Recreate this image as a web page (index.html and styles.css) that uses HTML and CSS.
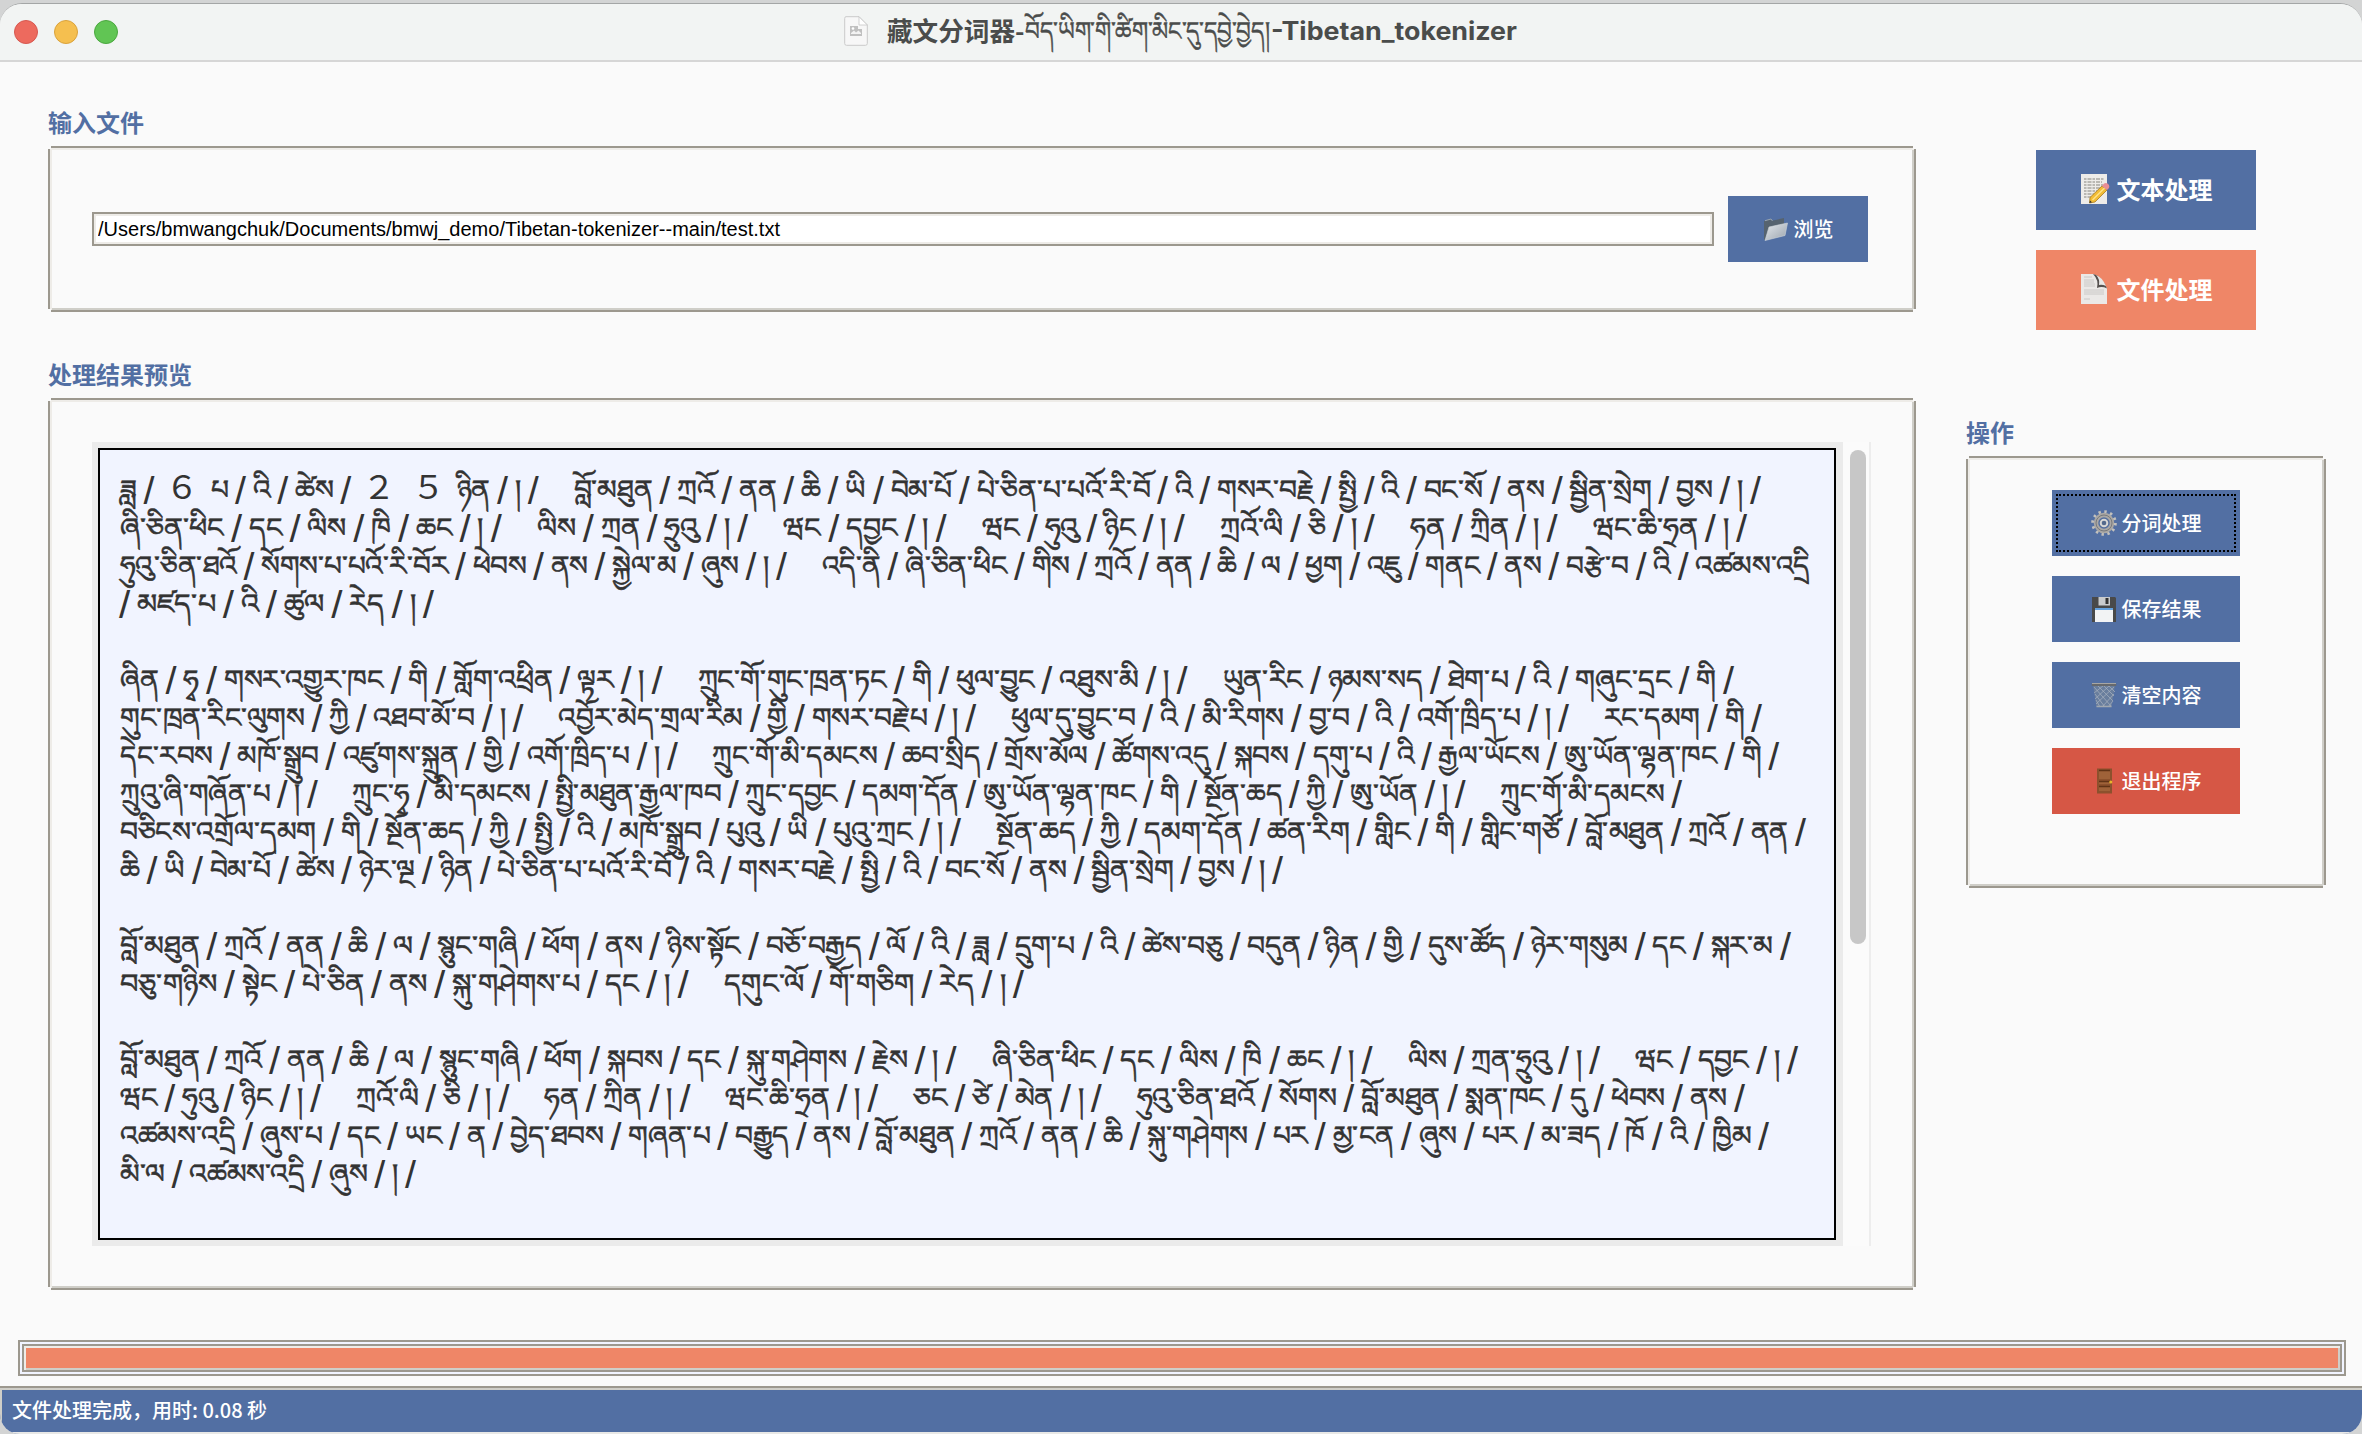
FILE: index.html
```html
<!DOCTYPE html>
<html lang="zh-CN">
<head>
<meta charset="utf-8">
<title>藏文分词器-Tibetan_tokenizer</title>
<link rel="stylesheet" href="styles.css">
</head>
<body>
<div class="window">
  <header class="titlebar">
    <div class="lights"><i class="red"></i><i class="yellow"></i><i class="green"></i></div>
    <h1 class="title">
      <svg class="doc" viewBox="0 0 24 30"><path d="M2 .7H15L23.3 9V27.5Q23.3 29.3 21.500 29.300H2.500Q.7 29.300.7 27.500V2.500Q.7.7 2 .7Z" fill="#f7f7f7" stroke="#cacaca"/><path d="M15 .7V9H23.300Z" fill="#fff" stroke="#c6c6c6" stroke-width=".8"/><path d="M6 10H14V13H18V20H6Z" fill="#c0c0c0"/><path d="M7 18V17L10 14.500L12 16.500L14.500 14.500L17 17V18Z" fill="#fff" opacity=".8"/><circle cx="9" cy="12.500" r="1.300" fill="#fff"/></svg>
      <span class="t-cjk">藏文分词器-</span><span class="t-bo" lang="bo"><span class="fit" data-w="245">བོད་ཡིག་གི་ཚིག་མིང་དུ་དབྱེ་བྱེད།</span></span><span class="t-lat"><span class="fit" data-w="246">-Tibetan_tokenizer</span></span>
    </h1>
  </header>
  <main class="content">
    <section class="left">
      <h2 class="label">输入文件</h2>
      <div class="frame file">
        <div class="entry"><span class="fit" data-w="682">/Users/bmwangchuk/Documents/bmwj_demo/Tibetan-tokenizer--main/test.txt</span></div>
        <button class="btn browse">
          <svg class="ic" viewBox="0 0 26 26"><defs><linearGradient id="fo" x1="0" y1="0" x2="1" y2="1"><stop offset="0" stop-color="#e4e8ec"/><stop offset="1" stop-color="#9aa3ad"/></linearGradient></defs><path d="M1 5L8 3L10 4.500L21 2V9L3 23L1 24Z" fill="#56636f"/><path d="M2 4.700L8 3L9.500 5" stroke="#98a4b0" fill="none"/><path d="M6 11L24.500 7L22 19.500L2 24.500Z" fill="url(#fo)" stroke="#d2d7dc" stroke-width=".6"/></svg>浏览</button>
      </div>
      <h2 class="label second">处理结果预览</h2>
      <div class="frame preview">
        <div class="textwrap"><div class="text" lang="bo">
<p><span class="fit" data-w="1640">ཟླ / <b>６</b> པ / འི / ཚེས / <b>２</b> <b>５</b> ཉིན / ། / &emsp;བློ་མཐུན / ཀྲའོ / ནན / ཆི / ཡི / བེམ་པོ / པེ་ཅིན་པ་པའོ་རི་བོ / འི / གསར་བརྗེ / སྤྱི / འི / བང་སོ / ནས / སྦྱིན་སྲེག / བྱས / ། /</span></p>
<p><span class="fit" data-w="1626">ཞི་ཅིན་ཕིང / དང / ལིས / ཁི / ཆང / ། / &emsp;ལིས / ཀྲན / ཧྲུའུ / ། / &emsp;ཝང / དབྱང / ། / &emsp;ཝང / ཧུའུ / ཉིང / ། / &emsp;ཀྲའོ་ལི / ཅི / ། / &emsp;ཧན / ཀྲིན / ། / &emsp;ཝང་ཆི་ཧྲན / ། /</span></p>
<p><span class="fit" data-w="1690">ཧུའུ་ཅིན་ཐའོ / སོགས་པ་པའོ་རི་བོར / ཕེབས / ནས / སྐྱེལ་མ / ཞུས / ། / &emsp;འདི་ནི / ཞི་ཅིན་ཕིང / གིས / ཀྲའོ / ནན / ཆི / ལ / ཕྱག / འཇུ / གནང / ནས / བརྩེ་བ / འི / འཚམས་འདྲི</span></p>
<p><span class="fit" data-w="313">/ མཛད་པ / འི / ཚུལ / རེད / ། /</span></p>
<p></p>
<p><span class="fit" data-w="1613">ཞིན / ཧྭ / གསར་འགྱུར་ཁང / གི / གློག་འཕྲིན / ལྟར / ། / &emsp;ཀྲུང་གོ་གུང་ཁྲན་ཏང / གི / ཕུལ་བྱུང / འཐུས་མི / ། / &emsp;ཡུན་རིང / ཉམས་སད / ཐེག་པ / འི / གཞུང་དྲང / གི /</span></p>
<p><span class="fit" data-w="1641">གུང་ཁྲན་རིང་ལུགས / ཀྱི / འཐབ་མོ་བ / ། / &emsp;འབྱོར་མེད་གྲལ་རིམ / གྱི / གསར་བརྗེ་པ / ། / &emsp;ཕུལ་དུ་བྱུང་བ / འི / མི་རིགས / བྱ་བ / འི / འགོ་ཁྲིད་པ / ། / &emsp;རང་དམག / གི /</span></p>
<p><span class="fit" data-w="1658">དེང་རབས / མཁོ་སྒྲུབ / འཛུགས་སྐྲུན / གྱི / འགོ་ཁྲིད་པ / ། / &emsp;ཀྲུང་གོ་མི་དམངས / ཆབ་སྲིད / གྲོས་མོལ / ཚོགས་འདུ / སྐབས / དགུ་པ / འི / རྒྱལ་ཡོངས / ཨུ་ཡོན་ལྷན་ཁང / གི /</span></p>
<p><span class="fit" data-w="1561">ཀྲུའུ་ཞི་གཞོན་པ / ། / &emsp;ཀྲུང་ཧྭ / མི་དམངས / སྤྱི་མཐུན་རྒྱལ་ཁབ / ཀྲུང་དབྱང / དམག་དོན / ཨུ་ཡོན་ལྷན་ཁང / གི / སྔོན་ཆད / ཀྱི / ཨུ་ཡོན / ། / &emsp;ཀྲུང་གོ་མི་དམངས /</span></p>
<p><span class="fit" data-w="1685">བཅིངས་འགྲོལ་དམག / གི / སྔོན་ཆད / ཀྱི / སྤྱི / འི / མཁོ་སྒྲུབ / པུའུ / ཡི / པུའུ་ཀྲང / ། / &emsp;སྔོན་ཆད / ཀྱི / དམག་དོན / ཚན་རིག / གླིང / གི / གླིང་གཙོ / བློ་མཐུན / ཀྲའོ / ནན /</span></p>
<p><span class="fit" data-w="1162">ཆི / ཡི / བེམ་པོ / ཚེས / ཉེར་ལྔ / ཉིན / པེ་ཅིན་པ་པའོ་རི་བོ / འི / གསར་བརྗེ / སྤྱི / འི / བང་སོ / ནས / སྦྱིན་སྲེག / བྱས / ། /</span></p>
<p></p>
<p><span class="fit" data-w="1670">བློ་མཐུན / ཀྲའོ / ནན / ཆི / ལ / སྙུང་གཞི / ཕོག / ནས / ཉིས་སྟོང / བཅོ་བརྒྱད / ལོ / འི / ཟླ / དྲུག་པ / འི / ཚེས་བཅུ / བདུན / ཉིན / གྱི / དུས་ཚོད / ཉེར་གསུམ / དང / སྐར་མ /</span></p>
<p><span class="fit" data-w="903">བཅུ་གཉིས / སྟེང / པེ་ཅིན / ནས / སྐུ་གཤེགས་པ / དང / ། / &emsp;དགུང་ལོ / གོ་གཅིག / རེད / ། /</span></p>
<p></p>
<p><span class="fit" data-w="1677">བློ་མཐུན / ཀྲའོ / ནན / ཆི / ལ / སྙུང་གཞི / ཕོག / སྐབས / དང / སྐུ་གཤེགས / རྗེས / ། / &emsp;ཞི་ཅིན་ཕིང / དང / ལིས / ཁི / ཆང / ། / &emsp;ལིས / ཀྲན་ཧྲུའུ / ། / &emsp;ཝང / དབྱང / ། /</span></p>
<p><span class="fit" data-w="1624">ཝང / ཧུའུ / ཉིང / ། / &emsp;ཀྲའོ་ལི / ཅི / ། / &emsp;ཧན / ཀྲིན / ། / &emsp;ཝང་ཆི་ཧྲན / ། / &emsp;ཅང / ཙེ / མེན / ། / &emsp;ཧུའུ་ཅིན་ཐའོ / སོགས / བློ་མཐུན / སྨན་ཁང / དུ / ཕེབས / ནས /</span></p>
<p><span class="fit" data-w="1648">འཚམས་འདྲི / ཞུས་པ / དང / ཡང / ན / བྱེད་ཐབས / གཞན་པ / བརྒྱུད / ནས / བློ་མཐུན / ཀྲའོ / ནན / ཆི / སྐུ་གཤེགས / པར / མྱ་ངན / ཞུས / པར / མ་ཟད / ཁོ / འི / ཁྱིམ /</span></p>
<p><span class="fit" data-w="295">མི་ལ / འཚམས་འདྲི / ཞུས / ། /</span></p>
        </div></div>
        <div class="scroll"><i></i></div>
      </div>
    </section>
    <aside class="right">
      <nav class="modes">
        <button class="btn big"><svg class="ic" viewBox="0 0 30 30"><path d="M1 0H27V30H1Z" fill="#eeece9"/><path d="M4 5H24M4 8H22M4 11H23M4 14H20M4 17H17M4 20H14M4 23H12" stroke="#85837f" stroke-width="1.200" stroke-dasharray="2.500 1 4 1"/><path d="M22 12L27 16L15 28L9.500 29L10 23.500Z" fill="#f2bc35" stroke="#a77a22" stroke-width=".8"/><path d="M24.500 14L12.500 26" stroke="#ffe38a" stroke-width="1.500"/><path d="M22 12L24 9.500Q27 8 29 11Q30 13 28.500 14.500L27 16Z" fill="#e88e96"/><path d="M10 26.500L9.500 29L12 28.300Z" fill="#333"/></svg>文本处理</button>
        <button class="btn big active"><svg class="ic" viewBox="0 0 30 30"><path d="M1 0H14L27 14V30H1Z" fill="#ebe9e7"/><path d="M4 3H12M4 6H14M4 8H14M4 10H15M4 12H15M4 16H24M4 18H24M4 20H24M4 25H10" stroke="#cac8c6"/><path d="M13 0Q21 1 27 14.500Q22 12 17 14Q19 6 13 0Z" fill="#55514f"/><path d="M16 1Q22 3 26 12Q22 10 19 11Q20 5 16 1Z" fill="#e9e7e5"/></svg>文件处理</button>
      </nav>
      <h2 class="label ops-label">操作</h2>
      <div class="frame ops">
        <button class="btn focus"><svg class="ic" viewBox="0 0 26 26"><circle cx="13" cy="13" r="11.300" fill="none" stroke="#c3c1bd" stroke-width="3" stroke-dasharray="2.400 3.516"/><circle cx="13" cy="13" r="8" fill="none" stroke="#aaa8a5" stroke-width="4.500"/><circle cx="13" cy="13" r="8" fill="none" stroke="#77797c" stroke-width="1"/><circle cx="13" cy="13" r="4.500" fill="#53698c"/><circle cx="13" cy="13" r="3.300" fill="none" stroke="#d6d6d5" stroke-width="2"/></svg>分词处理</button>
        <button class="btn"><svg class="ic" viewBox="0 0 26 26"><path d="M1 1H24L25 2V26H1Z" fill="#494949"/><path d="M7.500 1H19V9.500H7.500Z" fill="#c9cbcd"/><path d="M14.500 2H17.500V8H14.500Z" fill="#333"/><path d="M4 12H22V26H4Z" fill="#f2f3f4"/><path d="M4 12H22V14H4Z" fill="#65a2df"/></svg>保存结果</button>
        <button class="btn"><svg class="ic" viewBox="0 0 26 26"><path d="M2 3L5.500 25H20.500L24 3Z" fill="#77869a" opacity=".65"/><path d="M3 5L20 24M7 4L22 19M13 4L23 14M18 4L24 10M4 12L14 25M23 5L5 22M18 4L4 17M12 4L3 11M23 12L11 25M5 18L9 25M22 19L17 25" stroke="#aab3c0" stroke-width=".7"/><path d="M5.500 24.500H20.500" stroke="#a1a8b0" stroke-width="1.500"/><path d="M.8 1.500H25.200V4H.8Z" fill="#66696d"/><path d="M1 1.500H25" stroke="#a7a6a3"/></svg>清空内容</button>
        <button class="btn danger"><svg class="ic" viewBox="0 0 26 26"><path d="M6 .5H21V25.500H6Z" fill="#8c512d"/><path d="M8 2.500H19V11H8ZM8 13H19V16H8ZM8 18H19V23H8Z" fill="#9f6239"/><path d="M8 2.500H19M8 13.500H19M8 18.500H19" stroke="#603316" stroke-width="1.300"/><circle cx="19.800" cy="14" r="1.600" fill="#e8b42b"/></svg>退出程序</button>
      </div>
    </aside>
  </main>
  <div class="progress"><div class="trough"></div></div>
  <footer class="status"><span>文件处理完成，用时: 0.08 秒</span></footer>
</div>
<script src="fit.js"></script>
</body>
</html>
```
FILE: fit.js
```js
// Token separators are set larger than the words they divide.
document.querySelectorAll('.text .fit').forEach(function (el) {
  el.innerHTML = el.innerHTML.replace(/(^| )\/(?= |$)/g, '$1<i class="sep">/</i>');
});

document.querySelectorAll('.fit').forEach(function (el) {
  var natural = el.getBoundingClientRect().width;
  var target = Number(el.dataset.w);
  el.style.transform = 'scaleX(' + target / natural + ')';
});
```
FILE: styles.css
```css
* { box-sizing: border-box; }
body { margin: 0; background: #d3d4d4; font-family: "Liberation Sans", "Noto Sans CJK SC", sans-serif; }
.window { width: 2362px; height: 1431px; margin-top: 3px; background: #fafafa; border-radius: 22px 22px 20px 20px; border-top: 1px solid #a4a6a6; overflow: hidden; display: flex; flex-direction: column; }
.titlebar { height: 58px; flex: none; background: #f2f4f3; border-bottom: 2px solid #d6d6d6; display: grid; grid-template-columns: 844px 1fr; align-items: center; }
.lights { display: flex; gap: 16px; padding-left: 14px; }
.lights i { width: 24px; height: 24px; border-radius: 50%; border: 1px solid #d65850; background: #ed6a5e; }
.lights .yellow { background: #f5bf4f; border-color: #d9a23c; }
.lights .green { background: #61c554; border-color: #4ba73f; }
.title { margin: 0; padding-bottom: 2px; display: flex; align-items: center; font-size: 26px; font-weight: 700; color: #4a4c4b; line-height: 38px; white-space: nowrap; }
.doc { width: 24px; height: 30px; margin-right: 19px; }
.t-cjk { width: 138px; font-family: "Noto Sans CJK SC", sans-serif; font-size: 25.600px; line-height: 36px; padding-bottom: 2px; }
.t-bo { width: 246px; font-weight: 400; -webkit-text-stroke: .5px #4a4c4b; }
.t-lat { width: 246px; font-family: Inter, sans-serif; font-size: 25px; }
.fit { display: inline-block; transform-origin: 0 50%; white-space: pre; }
.content { display: flex; height: 1228px; flex: none; padding-left: 48px; }
.left { width: 1868px; margin-right: 50px; }
.label { margin: 0; font: 700 24px/36px "Noto Sans CJK SC", sans-serif; color: #526fa3; }
.left .label { padding-top: 42px; height: 84px; }
.left .label.second { height: 86px; padding-top: 44px; }
.frame { border: 2px solid #9c988e; box-shadow: inset 2px 2px #eeece8, inset -2px -2px #cfcec8; clip-path: polygon(3px 0, calc(100% - 3px) 0, calc(100% - 3px) 3px, 100% 3px, 100% calc(100% - 3px), calc(100% - 3px) calc(100% - 3px), calc(100% - 3px) 100%, 3px 100%, 3px calc(100% - 3px), 0 calc(100% - 3px), 0 3px, 3px 3px); }
.file { height: 166px; display: flex; align-items: center; padding-left: 42px; gap: 14px; }
.entry { width: 1622px; height: 34px; background: #fff; border: 2px solid #9c988e; box-shadow: inset 0 0 0 2px #eeece8; padding-left: 4px; font-size: 20px; line-height: 31px; color: #000; }
.btn { border: 0; padding: 0 0 1px; width: 188px; height: 66px; background: #526fa3; color: #fff; font: 500 20px/28px "Noto Sans CJK SC", sans-serif; display: flex; align-items: center; justify-content: center; gap: 5px; }
.btn .ic { width: 26px; height: 26px; flex: none; }
.browse { width: 140px; }
.preview { height: 892px; padding: 42px 0 0 42px; display: flex; align-items: flex-start; }
.textwrap { width: 1751px; height: 804px; background: #ebebeb; padding: 6px 7px 6px 6px; }
.text { height: 792px; border: 2px solid #000; background: #f1f4ff; padding: 20px 0 0 20px; font-size: 27px; color: #333; -webkit-text-stroke: .6px #333; }
.text p { margin: 0; height: 38px; line-height: 40px; }
.text b { font-family: "Noto Sans CJK SC", sans-serif; font-weight: 400; line-height: 0; font-size: 32px; margin: 0 4px; -webkit-text-stroke: 0; }
.sep { font: 400 38px/0 "Liberation Sans", sans-serif; vertical-align: -5px; margin: 0 -1px; -webkit-text-stroke: 0; }
.scroll { width: 28px; height: 804px; background: #fbfbfb; border-right: 2px solid #ededed; padding: 8px 0 0 7px; }
.scroll i { display: block; width: 16px; height: 494px; border-radius: 8px; background: #c7c7c7; }
.right { width: 360px; }
.modes { padding: 88px 0 0 70px; display: flex; flex-direction: column; gap: 20px; }
.big { width: 220px; height: 80px; font-size: 24px; font-weight: 700; gap: 7px; padding: 0 0 3px; }
.big .ic { width: 30px; height: 30px; }
.active { background: #ef8667; }
.ops-label { height: 126px; padding-top: 84px; }
.ops { height: 432px; padding: 32px 0 0 84px; display: flex; flex-direction: column; gap: 20px; }
.focus { outline: 2px dotted #000; outline-offset: -6px; }
.danger { background: #d65745; }
.progress { margin: 50px 16px 0 18px; height: 36px; flex: none; border: 2px solid #9c988e; background: #f1f4ff; padding: 2px; }
.trough { height: 28px; background: #ef8667; border: 2px solid #9c988e; box-shadow: inset 2px 2px #eeece8, inset -2px -2px #cfcec8; }
.status { margin-top: 10px; height: 48px; flex: none; background: #526fa3; border: 2px solid #9c988e; border-width: 2px 0; border-bottom-color: #e8e8e6; box-shadow: inset 2px 2px #cfcec8; color: #fff; font: 500 20px/44px "Noto Sans CJK SC", sans-serif; padding: 0 0 0 12px; }
```
